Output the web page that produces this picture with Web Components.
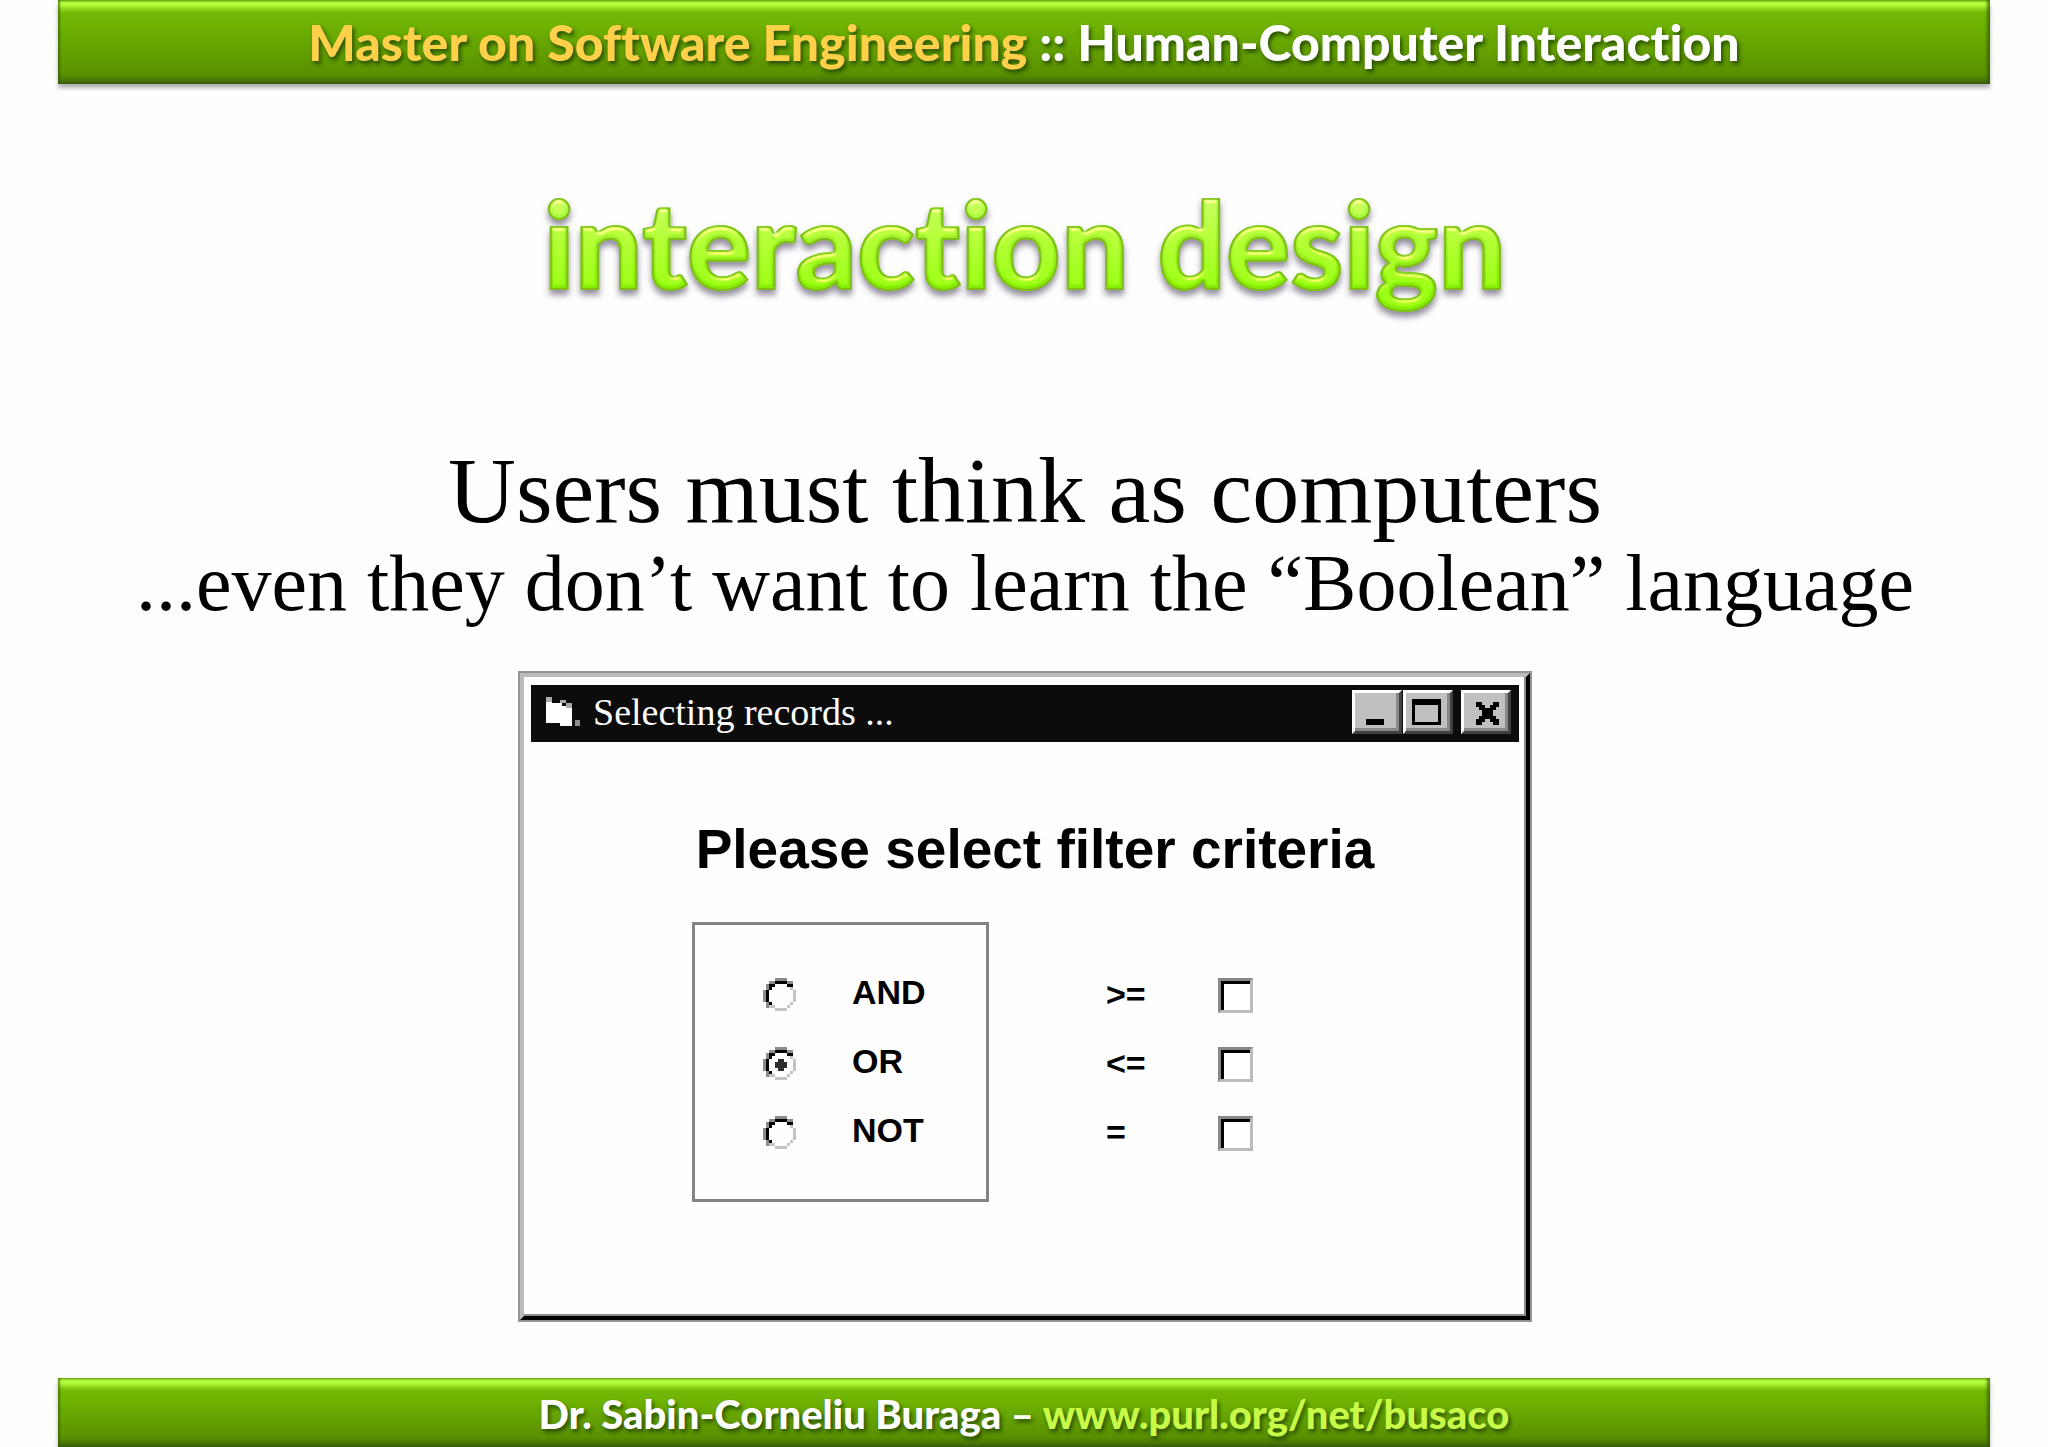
<!DOCTYPE html>
<html lang="en">
<head>
<meta charset="utf-8">
<title>Human-Computer Interaction</title>
<style>
  html, body { margin: 0; background: #fefefe; }
</style>
</head>
<body>
<slide-deck></slide-deck>

<script>
function define(name, html, setup) {
  const tpl = document.createElement('template');
  tpl.innerHTML = html;
  customElements.define(name, class extends HTMLElement {
    constructor() {
      super();
      this.attachShadow({ mode: 'open' }).appendChild(tpl.content.cloneNode(true));
    }
    connectedCallback() { if (setup) setup(this, this.shadowRoot); }
  });
}

define('glossy-bar', `
<style>
  :host {
    display: flex; align-items: center; justify-content: center; box-sizing: border-box;
    font: 900 var(--bar-size, 50px)/60px Lato, sans-serif; color: #fff; font-variant-ligatures: none;
    text-shadow: 2px 3px 4px rgba(20, 50, 0, .75);
    background: linear-gradient(#8cd41c 0, #b8ff40 3px, #b4fb3c 5px, #8fd61d 9px, #74b806 13px, #70b404 22px, #5a9000 calc(100% - 10px), #4c7c06 calc(100% - 5px), #3c6010 100%);
    box-shadow: inset 2px 0 2px rgba(50, 90, 0, .6), inset -3px 0 3px rgba(50, 90, 0, .7), 0 4px 4px rgba(0, 0, 0, .3);
  }
  div { white-space: nowrap; }
</style>
<div><slot></slot></div>`);

define('bevel-title', `
<style>
  :host { display: block; }
  svg { position: absolute; width: 0; height: 0; }
  h1 {
    margin: 0; text-align: center; font: 900 120px/144px Lato, sans-serif; font-variant-ligatures: none;
    filter: url(#bevel) drop-shadow(0 5px 3px rgba(40, 30, 60, .5));
  }
  span {
    color: transparent; background: linear-gradient(#b0fa4c 20%, #9cee20 50%, #84ec00 82%);
    -webkit-background-clip: text; background-clip: text;
    -webkit-text-stroke: 2px #80bc1c;
  }
</style>
<svg aria-hidden="true"><filter id="bevel" x="-5%" y="-5%" width="110%" height="120%" color-interpolation-filters="sRGB">
  <feGaussianBlur in="SourceAlpha" stdDeviation="2" result="soft"/>
  <feSpecularLighting in="soft" surfaceScale="4" specularConstant="0.8" specularExponent="18" lighting-color="#ffffe0" result="shine">
    <feDistantLight azimuth="260" elevation="42"/>
  </feSpecularLighting>
  <feComposite in="shine" in2="SourceAlpha" operator="in" result="cut"/>
  <feComposite in="SourceGraphic" in2="cut" operator="arithmetic" k1="0" k2="1" k3="0.6" k4="0"/>
</filter></svg>
<h1><span><slot></slot></span></h1>`);

define('lead-text', `
<style>
  :host { display: block; text-align: center; color: #000; font-family: "Liberation Serif", serif; }
  p { margin: 0; }
  .big { font-size: 94px; line-height: 98px; }
  .small { font-size: 80px; line-height: 88px; }
</style>
<p class="big"><slot name="first"></slot></p>
<p class="small"><slot name="second"></slot></p>`);

define('caption-button', `
<style>
  :host { display: block; }
  button {
    display: block; box-sizing: border-box; width: 50px; height: 44px; margin: 0; padding: 0;
    background: #c0c0c0; border: 3px solid; border-color: #fff #404040 #404040 #fff;
    box-shadow: inset -3px -3px 0 #888;
  }
  svg { display: block; width: 44px; height: 38px; fill: #000; shape-rendering: crispEdges; }
</style>
<button type="button"><svg viewBox="0 0 44 38" aria-hidden="true"></svg></button>`,
(host, root) => {
  const art = {
    Minimize: '<path d="M11 26h18v6H11z"/>',
    Maximize: '<path fill-rule="evenodd" d="M6 6h29v26H6zM9 12v17h23V12z"/>',
    Close: '<path d="M12 9h6v3h3v3h5v-3h3V9h6v5h-3v3h-3v6h3v3h3v6h-6v-3h-3v-3h-5v3h-3v3h-6v-6h3v-3h3v-6h-3v-3h-3z"/>'
  };
  root.querySelector('button').setAttribute('aria-label', host.getAttribute('kind'));
  root.querySelector('svg').innerHTML = art[host.getAttribute('kind')];
});

define('classic-window', `
<style>
  :host {
    display: block; box-sizing: border-box; width: 1014px; max-width: 100%;
    border: 2px solid #949494; background: #fefefe;
  }
  .frame { border: 4px solid; border-color: #bcbcbc #000 #000 #bcbcbc; padding: 8px 7px; box-shadow: inset -2px -2px 0 #8c8c8c; }
  header {
    display: flex; align-items: center; box-sizing: border-box; height: 57px; padding: 0 8px 3px 14px;
    background: #0c0c0c; color: #fff;
  }
  .icon { width: 36px; height: 33px; margin-right: 12px; shape-rendering: crispEdges; }
  h2 { flex: 1; margin: 0; font: 400 38px/44px "Liberation Serif", serif; }
  .controls { display: flex; gap: 1px; }
  .controls :last-child { margin-left: 7px; }
</style>
<div class="frame">
  <header>
    <svg class="icon" viewBox="0 0 36 33" aria-hidden="true">
      <path fill="#fff" d="M1 4h6v3h10v3h10v20H15v-3H1z"/>
      <path fill="#aaa" d="M1 1h6v5H1zM15 4h6v3h-6zM21 7h6v5h-6z"/>
      <path fill="#8c8c8c" d="M30 24h5v6h-5z"/>
    </svg>
    <h2><slot name="title"></slot></h2>
    <div class="controls">
      <caption-button kind="Minimize"></caption-button>
      <caption-button kind="Maximize"></caption-button>
      <caption-button kind="Close"></caption-button>
    </div>
  </header>
  <slot></slot>
</div>`);

define('radio-option', `
<style>
  :host { display: block; height: 35px; }
  label { display: flex; align-items: flex-start; gap: 56px; font: 700 34px/28px "Liberation Sans", sans-serif; }
  .dial { display: grid; width: 33px; height: 33px; }
  .dial > * { grid-area: 1 / 1; width: 33px; height: 33px; margin: 0; }
  input { appearance: none; outline: none; }
  svg { pointer-events: none; shape-rendering: crispEdges; }
  .dot { visibility: hidden; }
  input:checked + svg .dot { visibility: visible; }
</style>
<label>
  <span class="dial">
    <input type="radio">
    <svg viewBox="0 0 11 11" aria-hidden="true">
      <path fill="#8c8c8c" d="M4 0h4v1H4zM2 1h2v1H2zM8 1h2v1H8zM1 2h1v2H1zM0 4h1v4H0zM1 8h1v2H1z"/>
      <path fill="#000" d="M4 1h4v1H4zM2 2h2v1H2zM8 2h2v1H8zM2 3h1v1H2zM1 4h1v4H1zM2 8h1v1H2z"/>
      <path fill="#c4c4c4" d="M9 3h1v1H9zM10 4h1v4h-1zM9 8h1v1H9zM8 9h1v1H8zM4 10h4v1H4zM2 9h2v1H2z"/>
      <path class="dot" fill="#2c2c2c" d="M5 4h2v1h1v2H7v1H5V7H4V5h1z"/>
    </svg>
  </span>
  <span><slot></slot></span>
</label>`,
(host, root) => {
  const input = root.querySelector('input');
  input.checked = host.hasAttribute('checked');
  input.addEventListener('change', () => {
    host.parentNode.querySelectorAll('radio-option').forEach(o => {
      if (o !== host) o.shadowRoot.querySelector('input').checked = false;
    });
  });
});

define('check-option', `
<style>
  :host { display: block; height: 35px; }
  label { display: flex; align-items: flex-start; font: 700 34px/32px "Liberation Sans", sans-serif; }
  span { width: 112px; }
  input {
    appearance: none; box-sizing: border-box; width: 35px; height: 35px; margin: 0;
    border: 3px solid; border-color: #888 #bcbcbc #bcbcbc #888; background: #fff; box-shadow: inset 3px 3px 0 #000;
  }
  input:checked { background: linear-gradient(#000, #000) 10px 10px / 12px 12px no-repeat #fff; }
</style>
<label><span><slot></slot></span><input type="checkbox"></label>`);

define('filter-form', `
<style>
  :host { display: block; color: #000; }
  h3 { margin: 75px 0 0; padding-left: 20px; text-align: center; font: 700 55px/64px "Liberation Sans", sans-serif; }
  form { display: flex; padding: 41px 0 106px 161px; }
  fieldset, .operators { display: flex; flex-direction: column; gap: 34px; margin: 0; }
  fieldset { box-sizing: border-box; width: 297px; min-width: 0; padding: 53px 0 48px 68px; border: 3px solid #848484; }
  .operators { padding: 56px 0 0 117px; }
</style>
<h3>Please select filter criteria</h3>
<form>
  <fieldset aria-label="Combine with">
    <radio-option>AND</radio-option>
    <radio-option checked>OR</radio-option>
    <radio-option>NOT</radio-option>
  </fieldset>
  <div class="operators">
    <check-option>&gt;=</check-option>
    <check-option>&lt;=</check-option>
    <check-option>=</check-option>
  </div>
</form>`);

define('slide-deck', `
<style>
  :host { display: flex; flex-direction: column; box-sizing: border-box; min-height: 100vh; padding: 0 58px; }
  .top { height: 84px; }
  .bottom { height: 69px; margin-top: auto; padding-top: 3px; --bar-size: 40px; }
  main { display: flex; flex-direction: column; align-items: center; padding: 0 0 40px 2px; }
  bevel-title { margin-top: 87px; }
  lead-text { margin: 126px 0 44px; }
  .gold { color: #ffd04a; }
  a { color: #c8fa48; text-decoration: none; }
</style>
<glossy-bar class="top"><span class="gold">Master on Software Engineering</span> :: Human-Computer Interaction</glossy-bar>
<main>
  <bevel-title>interaction design</bevel-title>
  <lead-text>
    <span slot="first">Users must think as computers</span>
    <span slot="second">...even they don’t want to learn the “Boolean” language</span>
  </lead-text>
  <classic-window>
    <span slot="title">Selecting records ...</span>
    <filter-form></filter-form>
  </classic-window>
</main>
<glossy-bar class="bottom">Dr. Sabin-Corneliu Buraga – <a href="http://www.purl.org/net/busaco">www.purl.org/net/busaco</a></glossy-bar>`);
</script>
</body>
</html>
